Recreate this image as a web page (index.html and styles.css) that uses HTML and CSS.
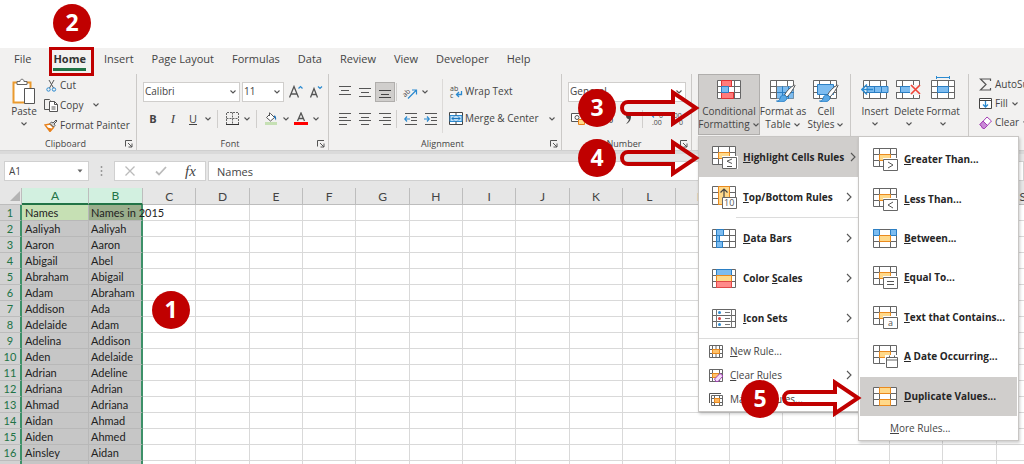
FILE: index.html
```html
<!DOCTYPE html>
<html lang="en">
<head>
<meta charset="utf-8">
<title>Conditional Formatting - Duplicate Values</title>
<link rel="stylesheet" href="styles.css">
</head>
<body>
<svg class="defs" aria-hidden="true">
  <symbol id="chev" viewBox="0 0 8 8"><path d="M1.500 2.500 4 5l2.500-2.500" fill="none" stroke="#555" stroke-width="1.100"/></symbol>
  <symbol id="next" viewBox="0 0 8 12"><path d="M2 2 6 6 2 10" fill="none" stroke="#555" stroke-width="1.100"/></symbol>
  <symbol id="launch" viewBox="0 0 8 8"><path d="M.5 6.500V.5H7M3 3l4 4M7 3.500V7H3.500" fill="none" stroke="#555"/></symbol>
  <symbol id="grid" viewBox="0 0 24 19"><path d="M.5.5h23v18H.5z" fill="#fff"/><path d="M.5.5h23v18H.5zM6.500.5v18M17.500.5v18M.5 6.500h23M.5 12.500h23" fill="none" stroke="#666"/></symbol>
  <symbol id="rule" viewBox="0 0 26 23"><use href="#grid" width="24" height="19"/><path d="M6.500 6.500h11v6h-11z" fill="#ffd98a" stroke="#ea8a1e"/><path d="M10 10h16v13H10z" fill="#fff"/><path d="M10.500 11.500h14v11h-14z" fill="#fff" stroke="#666"/></symbol>
  <symbol id="brush" viewBox="0 0 20 19"><path d="M18.500 1c-4 2-8 6-10 10l2.500 2C14 10 17.500 5 19 1.500z" fill="#fff" stroke="#555"/><path d="M8 11c-2 0-3.500 1-4 3.500C3.500 16.500 2 17 .5 17c3 1.500 8 1.500 10-1.500.7-1.500.3-3-.5-3.500z" fill="#5aa9e6" stroke="#2b7fc4"/></symbol>
</svg>

<div class="app">
  <nav class="tabs" aria-label="Ribbon tabs">
    <button>File</button><button class="active">Home</button><button>Insert</button><button>Page Layout</button><button>Formulas</button><button>Data</button><button>Review</button><button>View</button><button>Developer</button><button>Help</button>
  </nav>

  <div class="ribbon">
    <section class="group clipboard">
      <div class="body">
        <button class="big paste">
          <svg width="24" height="26" viewBox="0 0 24 26"><path d="M1.500 4.500h17v20h-17z" fill="#fff" stroke="#ea9a2e" stroke-width="2"/><path d="M5 6.500v-3h3c0-3 4-3 4 0h3v3z" fill="#fff" stroke="#666"/><path d="M12.500 10.500h10v15h-10z" fill="#fff" stroke="#555"/></svg>
          <span>Paste</span><svg width="8" height="8"><use href="#chev"/></svg>
        </button>
        <div class="stack">
          <button class="item"><svg width="14" height="13" viewBox="0 0 14 13"><path d="M5 1l4.500 8M10 1 5.500 9" stroke="#555" fill="none"/><circle cx="4.500" cy="10.500" r="1.700" fill="none" stroke="#2b8ad0"/><circle cx="10" cy="10.500" r="1.700" fill="none" stroke="#2b8ad0"/></svg>Cut</button>
          <button class="item"><svg width="14" height="13" viewBox="0 0 14 13"><path d="M5 10.500H.5V.5h5l1 1" fill="none" stroke="#555"/><path d="M5.500 2.500h5l3 3v7h-8z" fill="#fff" stroke="#555"/><path d="M10.500 2.500v3h3M7.500 8h4M7.500 10h4" fill="none" stroke="#555"/></svg>Copy<svg class="after" width="8" height="8"><use href="#chev"/></svg></button>
          <button class="item"><svg width="14" height="13" viewBox="0 0 14 13"><path d="M1 6l5-1 3.500 3.500L6 12.500z" fill="#fff" stroke="#e8801a" stroke-width="1.400"/><path d="M3 8.500l5 1-2 3z" fill="#e8801a"/><path d="M6 4.500l1.500-1.500 1.500 1 3-3 1 1-3 3 1 1.500L9.500 8z" fill="#ddd" stroke="#555"/></svg>Format Painter</button>
        </div>
      </div>
      <footer><span>Clipboard</span><svg width="8" height="8"><use href="#launch"/></svg></footer>
    </section>

    <section class="group font">
      <div class="body rows">
        <div class="row">
          <label class="combo family"><select aria-label="Font"><option>Calibri</option></select><svg width="8" height="8"><use href="#chev"/></svg></label>
          <label class="combo size"><select aria-label="Font size"><option>11</option></select><svg width="8" height="8"><use href="#chev"/></svg></label>
          <button class="tool" aria-label="Increase font size"><svg width="14" height="14" viewBox="0 0 14 14"><path d="M.5 12.500 5 1.500l4.500 11M2 9h6" fill="none" stroke="#555" stroke-width="1.300"/><path d="M9.500 3.500l2-2 2 2" fill="none" stroke="#2b8ad0" stroke-width="1.200"/></svg></button>
          <button class="tool" aria-label="Decrease font size"><svg width="14" height="14" viewBox="0 0 14 14"><path d="M1.500 12.500l3.500-9 3.500 9M2.500 9.500h5" fill="none" stroke="#555" stroke-width="1.300"/><path d="M9 1.500l2 2 2-2" fill="none" stroke="#2b8ad0" stroke-width="1.200"/></svg></button>
        </div>
        <div class="row">
          <button class="tool b">B</button><button class="tool i">I</button><button class="tool u">U</button>
          <svg width="10" height="8"><use href="#chev"/></svg><i class="bar"></i>
          <button class="tool" aria-label="Borders"><svg width="13" height="13" viewBox="0 0 13 13"><path d="M.5 12V.5h12V12M6.500.5v12M.5 6.500h12" fill="none" stroke="#666" stroke-dasharray="2 1"/><path d="M0 12.500h13" stroke="#333"/></svg></button>
          <svg width="10" height="8"><use href="#chev"/></svg><i class="bar"></i>
          <button class="tool" aria-label="Fill color"><svg width="14" height="13" viewBox="0 0 14 13"><path d="M2.500 5.500 6.500 1.500l4 4-4 3.500z" fill="#fff" stroke="#555"/><path d="M5.500 4V.5" stroke="#555"/><path d="M10 3.500c2 0 2.500 2 2 5-1-1-1-3-2-3z" fill="#1f6fb5"/><path d="M1 10h12v3H1z" fill="#c6e0b4"/></svg></button>
          <svg width="10" height="8"><use href="#chev"/></svg>
          <button class="tool" aria-label="Font color"><svg width="14" height="13" viewBox="0 0 14 13"><path d="M3.500 9 7 1l3.500 8M5 6.500h4" fill="none" stroke="#555" stroke-width="1.300"/><path d="M0 10h14v3H0z" fill="#f00"/></svg></button>
          <svg width="10" height="8"><use href="#chev"/></svg>
        </div>
      </div>
      <footer><span>Font</span><svg width="8" height="8"><use href="#launch"/></svg></footer>
    </section>

    <section class="group align">
      <div class="body">
        <div class="rows">
          <div class="row">
            <button class="tool" aria-label="Top align"><svg width="12" height="14" viewBox="0 0 12 14"><path d="M0 1.500h12M2 5.500h8M0 9.500h12" stroke="#555"/></svg></button>
            <button class="tool" aria-label="Middle align"><svg width="12" height="14" viewBox="0 0 12 14"><path d="M0 3.500h12M2 7.500h8M0 11.500h12" stroke="#555"/></svg></button>
            <button class="tool pressed" aria-label="Bottom align"><svg width="12" height="14" viewBox="0 0 12 14"><path d="M0 5.500h12M2 9.500h8M0 12.500h12" stroke="#444"/></svg></button>
            <i class="bar"></i>
            <button class="tool" aria-label="Orientation"><svg width="16" height="14" viewBox="0 0 16 14"><text x="1" y="10" class="mini" transform="rotate(-45 5 9)">ab</text><path d="M6 13.500 14 5.500M10 5h4.500v4.500" fill="none" stroke="#2b8ad0" stroke-width="1.200"/></svg></button>
            <svg width="10" height="8"><use href="#chev"/></svg>
          </div>
          <div class="row">
            <button class="tool" aria-label="Align left"><svg width="12" height="12" viewBox="0 0 12 12"><path d="M0 .5h12M0 4.500h8M0 7.500h12M0 11.500h8" stroke="#555"/></svg></button>
            <button class="tool" aria-label="Center"><svg width="12" height="12" viewBox="0 0 12 12"><path d="M0 .5h12M2 4.500h8M0 7.500h12M2 11.500h8" stroke="#555"/></svg></button>
            <button class="tool" aria-label="Align right"><svg width="12" height="12" viewBox="0 0 12 12"><path d="M0 .5h12M4 4.500h8M0 7.500h12M4 11.500h8" stroke="#555"/></svg></button>
            <i class="bar"></i>
            <button class="tool" aria-label="Decrease indent"><svg width="13" height="12" viewBox="0 0 13 12"><path d="M1 .5h12M7 4.500h6M7 7.500h6M1 11.500h12" stroke="#555"/><path d="M6 6H1M3 3.500.8 6 3 8.500" fill="none" stroke="#2b8ad0" stroke-width="1.200"/></svg></button>
            <button class="tool" aria-label="Increase indent"><svg width="13" height="12" viewBox="0 0 13 12"><path d="M1 .5h12M7 4.500h6M7 7.500h6M1 11.500h12" stroke="#555"/><path d="M0 6h5M3 3.500 5.200 6 3 8.500" fill="none" stroke="#2b8ad0" stroke-width="1.200"/></svg></button>
          </div>
        </div>
        <div class="rows wraps">
          <button class="item"><svg width="14" height="14" viewBox="0 0 14 14"><text x="1" y="6" class="mini wide">ab</text><text x="1" y="13" class="mini wide">c</text><path d="M12.500 6v3.500H7.500M10 7l-2.500 2.500L10 12" fill="none" stroke="#2b8ad0" stroke-width="1.300"/></svg>Wrap Text</button>
          <button class="item"><svg width="14" height="13" viewBox="0 0 14 13"><path d="M.5.5h13v12H.5z" fill="#fff" stroke="#444"/><path d="M1 3.500h12v6H1z" fill="#b9dcf6" stroke="#2b8ad0"/><path d="M7 .5v3M7 9.500v3" stroke="#444"/><path d="M3 6.500h8M5 4.500l-2 2 2 2M9 4.500l2 2-2 2" fill="none" stroke="#1b75bb"/></svg>Merge &amp; Center<svg class="after" width="8" height="8"><use href="#chev"/></svg></button>
        </div>
      </div>
      <footer><span>Alignment</span><svg width="8" height="8"><use href="#launch"/></svg></footer>
    </section>

    <section class="group number">
      <div class="body rows">
        <div class="row"><label class="combo format"><select aria-label="Number format"><option>General</option></select><svg width="8" height="8"><use href="#chev"/></svg></label></div>
        <div class="row">
          <button class="tool" aria-label="Accounting format"><svg width="15" height="13" viewBox="0 0 15 13"><path d="M.5 1.500h13v8H.5z" fill="#fff" stroke="#555"/><circle cx="6" cy="5.500" r="2" fill="none" stroke="#555"/><path d="M7.500 7.500h6v5h-6z" fill="#ffd98a" stroke="#e8801a"/></svg></button>
          <svg width="10" height="8"><use href="#chev"/></svg>
          <button class="tool pct">%</button>
          <button class="tool comma" aria-label="Comma style"><svg width="8" height="12" viewBox="0 0 8 12"><path d="M2 2.500C2 0 7 0 7 3.500S5 10 2 11c2-2 3-3.500 2.800-5C3 6 2 4.500 2 2.500z" fill="#444"/></svg></button>
          <i class="bar"></i>
          <button class="tool" aria-label="Increase decimal"><svg width="15" height="14" viewBox="0 0 15 14"><path d="M7 3H1.500M4 .5 1.500 3 4 5.500" fill="none" stroke="#2b8ad0" stroke-width="1.200"/><text x="9" y="6" class="mini wide">0</text><text x="2" y="13" class="mini wide">.00</text></svg></button>
          <button class="tool" aria-label="Decrease decimal"><svg width="15" height="14" viewBox="0 0 15 14"><text x="2" y="6" class="mini wide">.00</text><text x="9" y="13" class="mini wide">0</text><path d="M1 10h5.500M4 7.500 6.500 10 4 12.500" fill="none" stroke="#2b8ad0" stroke-width="1.200"/></svg></button>
        </div>
      </div>
      <footer><span>Number</span><svg width="8" height="8"><use href="#launch"/></svg></footer>
    </section>

    <section class="group styles">
      <div class="body">
        <button class="big cond pressed">
          <svg width="24" height="22" viewBox="0 0 24 22"><use href="#grid" width="24" height="19"/><path d="M4.500.5h10v6h-10zM4.500 12.500h12v6h-12z" fill="#ff7b7b" stroke="#d33"/><path d="M4.500 6.500h7v6h-7z" fill="#7dbcf0" stroke="#2b7fc4"/></svg>
          <span>Conditional</span><span>Formatting <svg width="8" height="8"><use href="#chev"/></svg></span>
        </button>
        <button class="big w44">
          <svg width="26" height="22" viewBox="0 0 26 22"><use href="#grid" width="24" height="19"/><path d="M7 6.500h16.500v12H7z" fill="#7dbcf0"/><path d="M12.500 6v13M18.500 6v13M7 12.500h17" stroke="#2b7fc4"/><use href="#brush" x="6" y="4" width="20" height="19"/></svg>
          <span>Format as</span><span>Table <svg width="8" height="8"><use href="#chev"/></svg></span>
        </button>
        <button class="big w40">
          <svg width="26" height="22" viewBox="0 0 26 22"><use href="#grid" width="24" height="19"/><path d="M4.500 4.500h16v10h-16z" fill="#7dbcf0" stroke="#2b7fc4"/><use href="#brush" x="6" y="4" width="20" height="19"/></svg>
          <span>Cell</span><span>Styles <svg width="8" height="8"><use href="#chev"/></svg></span>
        </button>
      </div>
    </section>

    <section class="group cells">
      <div class="body">
        <button class="big w34"><svg width="28" height="22" viewBox="0 0 28 22"><use href="#grid" x="2" width="24" height="19"/><path d="M6 6.500h21v6H6z" fill="#7dbcf0" stroke="#2b7fc4"/><path d="M20.500 6.500v6M13.500 6.500v6" stroke="#2b7fc4"/><path d="M12 9.500H1.500M6 4.500l-5 5 5 5" fill="none" stroke="#2b8ad0" stroke-width="1.600"/></svg><span>Insert</span><svg width="8" height="8"><use href="#chev"/></svg></button>
        <button class="big w34"><svg width="26" height="22" viewBox="0 0 26 22"><use href="#grid" width="24" height="19"/><path d="M0 7h4v5H0z" fill="#f2f1f0"/><path d="M4.500 6.500h11v6h-11z" fill="#7dbcf0" stroke="#2b7fc4"/><path d="M14 5h11v10H14z" fill="#f2f1f0"/><path d="M15 5l9 9M24 5l-9 9" stroke="#f04438" stroke-width="1.600"/></svg><span>Delete</span><svg width="8" height="8"><use href="#chev"/></svg></button>
        <button class="big w34 tall"><svg width="24" height="26" viewBox="0 0 24 26"><path d="M6 1.500h12M5.500 0v3M18.500 0v3" stroke="#2b8ad0"/><use href="#grid" y="4" width="24" height="19"/><path d="M6.500 10.500h11v6h-11z" fill="#7dbcf0" stroke="#2b7fc4"/></svg><span>Format</span><svg width="8" height="8"><use href="#chev"/></svg></button>
      </div>
    </section>

    <section class="group editing">
      <div class="stack">
        <button class="item"><svg width="13" height="13" viewBox="0 0 13 13"><path d="M11.500 3V1h-10l5.500 5.500L1.500 12h10v-2" fill="none" stroke="#555" stroke-width="1.200"/></svg>AutoSum</button>
        <button class="item"><svg width="13" height="13" viewBox="0 0 13 13"><path d="M.5 1.500h12v10H.5zM.5 3.500h12" fill="#fff" stroke="#444"/><path d="M6.500 4v6M4 7.500l2.500 2.500L9 7.500" fill="none" stroke="#2b8ad0" stroke-width="1.300"/></svg>Fill <svg width="8" height="8"><use href="#chev"/></svg></button>
        <button class="item"><svg width="13" height="13" viewBox="0 0 13 13"><path d="M1 8.500 8 1l4.500 4-7 7.500H4z" fill="#fff" stroke="#a33fb5"/><path d="M1 8.500l3-3.500 4.500 4.500-3 3H4z" fill="#c98ad6" stroke="#a33fb5"/></svg>Clear <svg width="8" height="8"><use href="#chev"/></svg></button>
      </div>
    </section>
  </div>

  <div class="formula">
    <label class="namebox"><input aria-label="Name box" value="A1"><svg width="8" height="6" viewBox="0 0 8 6"><path d="M1.500 1.500h5L4 4.500z" fill="#666"/></svg></label>
    <svg class="dots" width="3" height="12" viewBox="0 0 3 12"><path d="M1.500 1v10" stroke="#999" stroke-width="1.500" stroke-dasharray="2 2"/></svg>
    <div class="fxbox">
      <button aria-label="Cancel"><svg width="12" height="10" viewBox="0 0 12 10"><path d="M1.500.5l9 9M10.500.5l-9 9" stroke="#bbb" stroke-width="1.300"/></svg></button>
      <button aria-label="Enter"><svg width="12" height="10" viewBox="0 0 12 10"><path d="M1 5.500l3 3L11 1" fill="none" stroke="#bbb" stroke-width="1.800"/></svg></button>
      <button class="fx">fx</button>
    </div>
    <input class="entry" aria-label="Formula bar" value="Names">
  </div>

  <div class="sheet"><table><colgroup id="cols"></colgroup><thead><tr id="head"></tr></thead><tbody id="rows"></tbody></table></div>

  <div class="menu main" role="menu">
    <button class="entry-big on"><svg width="26" height="23" viewBox="0 0 26 23"><use href="#rule"/><path d="M20 13l-5 2.200 5 2.300M15 20.500h5" fill="none" stroke="#555"/></svg><span><u>H</u>ighlight Cells Rules</span><svg width="8" height="12"><use href="#next"/></svg></button>
    <button class="entry-big"><svg width="26" height="23" viewBox="0 0 26 23"><use href="#grid" width="24" height="19"/><path d="M6.500.5h11v18h-11z" fill="#ffd98a" stroke="#ea8a1e"/><path d="M12 11V3M8.500 6.500 12 3l3.500 3.500" fill="none" stroke="#444" stroke-width="1.200"/><path d="M10.500 11.500h14v11h-14z" fill="#fff" stroke="#666"/><text x="12" y="20" class="glyph">10</text></svg><span><u>T</u>op/Bottom Rules</span><svg width="8" height="12"><use href="#next"/></svg></button>
    <hr class="inset">
    <button class="entry-big"><svg width="26" height="19" viewBox="0 0 26 19"><use href="#grid" width="24" height="19"/><path d="M4.500.5h7v6h-7zM4.500 6.500h3v6h-3zM4.500 12.500h6v6h-6z" fill="#7dbcf0" stroke="#2b7fc4"/></svg><span><u>D</u>ata Bars</span><svg width="8" height="12"><use href="#next"/></svg></button>
    <button class="entry-big"><svg width="26" height="19" viewBox="0 0 26 19"><use href="#grid" width="24" height="19"/><path d="M4.500.5h15v6h-15z" fill="#7dbcf0" stroke="#2b7fc4"/><path d="M4.500 6.500h15v6h-15z" fill="#ffd98a" stroke="#ea8a1e"/><path d="M4.500 12.500h15v6h-15z" fill="#ff8a8a" stroke="#e04848"/></svg><span>Color <u>S</u>cales</span><svg width="8" height="12"><use href="#next"/></svg></button>
    <button class="entry-big"><svg width="26" height="19" viewBox="0 0 26 19"><use href="#grid" width="24" height="19"/><path d="M5 1h14v5H5zM5 7h14v5H5zM5 13h14v5H5z" fill="#fff"/><path d="M4.500.5v18M19.500.5v18M13 3.500h5M13 9.500h5M13 15.500h5" stroke="#777"/><circle cx="7.500" cy="3.500" r="1.500" fill="#2b8ad0"/><circle cx="7.500" cy="9.500" r="1.500" fill="#e04040"/><circle cx="7.500" cy="15.500" r="1.500" fill="#2b8ad0"/></svg><span><u>I</u>con Sets</span><svg width="8" height="12"><use href="#next"/></svg></button>
    <hr>
    <button class="entry-small"><svg width="14" height="13" viewBox="0 0 14 13"><path d="M.5.5h13v12H.5zM3.500.5v12M10.500.5v12M.5 4.500h13M.5 8.500h13M7 .5v12" fill="#fff" stroke="#666"/><path d="M3.500 4.500h7v4h-7z" fill="#ffc36b" stroke="#ea8a1e"/></svg><span><u>N</u>ew Rule...</span></button>
    <button class="entry-small"><svg width="14" height="13" viewBox="0 0 14 13"><path d="M.5.5h13v12H.5zM3.500.5v12M10.500.5v12M.5 4.500h13M.5 8.500h13" fill="#fff" stroke="#666"/><path d="M3.500 4.500h6v4h-6z" fill="#ffc36b" stroke="#ea8a1e"/><path d="M5.500 10 11 4.500l3 2.500-5 5.500H7z" fill="#f2dcf6" stroke="#a33fb5"/></svg><span><u>C</u>lear Rules</span><svg width="8" height="12"><use href="#next"/></svg></button>
    <button class="entry-small"><svg width="14" height="13" viewBox="0 0 14 13"><path d="M.5 10V.5H12" fill="none" stroke="#555"/><path d="M2.500 2.500h11v10h-11zM5.500 2.500v10M10.500 2.500v10M2.500 5.500h11M2.500 9.500h11" fill="#fff" stroke="#666"/><path d="M5.500 5.500h5v4h-5z" fill="#ffb65c" stroke="#ea8a1e"/></svg><span>Ma<u>n</u>age Rules...</span></button>
  </div>

  <div class="menu sub" role="menu">
    <div class="list">
      <button class="entry-big"><svg width="26" height="23" viewBox="0 0 26 23"><use href="#rule"/><path d="M15 14l5 3-5 3" fill="none" stroke="#555"/></svg><span><u>G</u>reater Than...</span></button>
      <button class="entry-big"><svg width="26" height="23" viewBox="0 0 26 23"><use href="#rule"/><path d="M20 14l-5 3 5 3" fill="none" stroke="#555"/></svg><span><u>L</u>ess Than...</span></button>
      <button class="entry-big"><svg class="flat" width="26" height="19" viewBox="0 0 26 19"><use href="#grid" width="24" height="19"/><path d="M.5.5h6v6h-6zM17.500.5h6v6h-6z" fill="#7dbcf0" stroke="#2b7fc4"/><path d="M6.500 6.500h11v6h-11z" fill="#ffd98a" stroke="#ea8a1e"/></svg><span><u>B</u>etween...</span></button>
      <button class="entry-big"><svg width="26" height="23" viewBox="0 0 26 23"><use href="#rule"/><path d="M14 15.500h7M14 18.500h7" stroke="#555"/></svg><span><u>E</u>qual To...</span></button>
      <button class="entry-big"><svg width="26" height="23" viewBox="0 0 26 23"><use href="#rule"/><text x="15" y="20" class="glyph">a</text></svg><span><u>T</u>ext that Contains...</span></button>
      <button class="entry-big"><svg width="26" height="23" viewBox="0 0 26 23"><use href="#grid" width="24" height="19"/><path d="M6.500 6.500h11v6h-11z" fill="#ffd98a" stroke="#ea8a1e"/><path d="M12 10h14v13H12z" fill="#fff"/><path d="M13.500 12.500h11v10h-11zM13.500 15h11M16.500 10.500v2M21.500 10.500v2" fill="#fff" stroke="#666"/></svg><span><u>A</u> Date Occurring...</span></button>
      <button class="entry-big on"><svg class="flat" width="26" height="19" viewBox="0 0 26 19"><use href="#grid" width="24" height="19"/><path d="M6.500.5h11v6h-11zM6.500 12.500h11v6h-11z" fill="#ffd98a" stroke="#ea8a1e"/></svg><span><u>D</u>uplicate Values...</span></button>
    </div>
    <button class="more"><u>M</u>ore Rules...</button>
  </div>

  <div class="frame"></div>
  <span class="step s1">1</span><span class="step s2">2</span><span class="step s3">3</span><span class="step s4">4</span><span class="step s5">5</span>
  <svg class="arrow a3" width="80" height="38" viewBox="0 0 80 38"><path d="M53 13H8a6 6 0 0 0 0 12h45v9.500L76 19 53 3.500z"/></svg>
  <svg class="arrow a4" width="80" height="38" viewBox="0 0 80 38"><path d="M53 13H8a6 6 0 0 0 0 12h45v9.500L76 19 53 3.500z"/></svg>
  <svg class="arrow a5" width="80" height="38" viewBox="0 0 80 38"><path d="M53 13H8a6 6 0 0 0 0 12h45v9.500L76 19 53 3.500z"/></svg>
</div>
<script src="script.js"></script>
</body>
</html>
```
FILE: styles.css
```css
* { box-sizing: border-box; }
body { margin: 0; background: #fff; color: #444; font: 10px/13px "Open Sans", "Noto Sans", sans-serif; }
button, input, select { font: inherit; color: inherit; border: 0; background: none; margin: 0; padding: 0; }
svg { display: block; flex: none; }
.defs { position: absolute; width: 0; height: 0; }
.app { position: relative; height: 100vh; overflow: hidden; padding-top: 48px; display: flex; flex-direction: column; }

.tabs { display: flex; flex: none; gap: 18px; padding: 0 14px; height: 26px; background: #f2f1f0; font-size: 11px; }
.tabs button { height: 23px; border-bottom: 3px solid transparent; white-space: nowrap; }
.tabs .active { margin-left: 4px; font-weight: 700; color: #333; border-color: #217346; }

.ribbon { display: flex; flex: none; height: 77px; background: #f2f1f0; border-bottom: 1px solid #cfcfcf; }
.group { display: flex; flex-direction: column; flex: none; border-right: 1px solid #cbc9c7; }
.body { display: flex; flex: 1; }
.group footer { display: flex; align-items: center; height: 12px; padding-right: 3px; font-size: 9px; line-height: 12px; }
.group footer span { flex: 1; text-align: center; padding-left: 6px; }
.clipboard { width: 137px; }
.font { width: 192px; }
.align { width: 233px; }
.number { width: 130px; }
.styles { width: 159px; padding-left: 6px; }
.cells { width: 118px; padding-left: 7px; }
.editing { flex: 1 0 56px; border: 0; padding-left: 10px; overflow: hidden; }

.big { display: flex; flex-direction: column; align-items: center; height: 61px; padding-top: 6px; line-height: 13px; white-space: nowrap; }
.big > svg:first-child { margin-bottom: 3px; }
.big span { display: flex; align-items: center; gap: 2px; }
.big > svg:last-child { margin-top: 2px; }
.big.tall { padding-top: 2px; }
.paste { width: 36px; margin-left: 6px; padding-top: 4px; }
.paste > svg:first-child { margin-bottom: 1px; }
.cond { width: 62px; }
.pressed { background: #d0cecc; outline: 1px solid #b0aeac; outline-offset: -1px; }
.w44 { width: 46px; }
.w40 { width: 40px; }
.w34 { width: 34px; }
.stack { display: flex; flex-direction: column; padding-top: 1px; }
.item { display: flex; align-items: center; gap: 2px; height: 20px; white-space: nowrap; }
.item .after { margin-left: 7px; }
.editing .item { height: 19px; gap: 3px; }
.clipboard .stack { margin-left: 2px; }

.rows { display: flex; flex-direction: column; padding-top: 7px; gap: 6px; }
.row { display: flex; align-items: center; height: 21px; }
.font .rows { padding-left: 6px; }
.combo { display: flex; align-items: center; height: 20px; padding: 0 2px 0 1px; background: #fff; border: 1px solid #d0cecc; }
.combo select { flex: 1; min-width: 0; appearance: none; }
.family { width: 97px; }
.size { width: 42px; margin: 0 2px; }
.format { width: 118px; }
.tool { display: flex; align-items: center; justify-content: center; width: 20px; height: 20px; font-size: 11px; }
.b { font-weight: 700; }
.i { font-family: "Liberation Serif", serif; font-style: italic; font-size: 13px; }
.u { text-decoration: underline; }
.pct { font-size: 13px; }
.bar { width: 1px; height: 18px; margin: 0 4px; background: #d0cecc; }
.align .rows { padding-left: 6px; }
.align .bar { margin: 0 3px 0 1px; }
.align .body > .rows:first-child { width: 113px; }
.align .wraps { border-left: 1px solid #dcdad8; margin: 5px 0; padding-top: 2px; }
.align .wraps .item { height: 21px; }
.number .rows { padding-left: 6px; }
.mini { font: 7px "Open Sans", sans-serif; fill: #444; }
.glyph { font: 9px "Open Sans", sans-serif; fill: #555; }

.formula { display: flex; flex: none; align-items: center; height: 37px; padding-left: 4px; background: #e6e6e6; border-top: 3px solid #dadada; font-size: 11px; }
.namebox, .fxbox, .entry { height: 20px; background: #fff; border: 1px solid #d0d0d0; display: flex; align-items: center; }
.namebox { width: 85px; padding: 0 4px; }
.namebox input { flex: 1; min-width: 0; font-size: 10px; }
.dots { margin: 0 11px; }
.fxbox { width: 92px; justify-content: space-around; }
.fx { font: italic 15px "Liberation Serif", serif; }
.entry { flex: 1; min-width: 0; margin-left: 2px; padding: 0 8px; }

.sheet { flex: 1; min-height: 0; overflow: hidden; color: #222; font: 11px/15px Lato, sans-serif; }
table { width: calc(100% + 26px); table-layout: fixed; border-collapse: separate; border-spacing: 0; }
.c0 { width: 22px; }
.ca { width: 67px; }
.cb { width: 54px; }
th, td { height: 16px; padding: 0; white-space: nowrap; font-weight: 400; border-right: 1px solid #d9d9d9; border-bottom: 1px solid #d9d9d9; }
thead th { height: 17px; font-size: 12px; background: #e6e6e6; border-color: #bdbdbd; color: #444; }
thead .sel { background: #d2f0e0; color: #217346; border-bottom: 2px solid #217346; }
.corner svg { margin-left: auto; }
tbody th { background: #d2d2d2; color: #217346; border-right: 2px solid #3d9068; border-bottom-color: #bcbcbc; }
.a, .b2 { background: #c6c6c6; border-color: #b8b8b8; padding-left: 2px; }
.a { padding-left: 3px; }
.b2 { border-right: 2px solid #3d9068; }
tr:first-child > .a { background: #c6e0b4; }
tr:first-child > .b2 { background: #9aae8c; }
.b2 span { position: relative; }

.menu { position: absolute; top: 136px; background: #fff; border: 1px solid #c8c6c4; box-shadow: 1px 2px 3px #0003; display: flex; flex-direction: column; color: #444; }
.menu button { display: flex; align-items: center; text-align: left; white-space: nowrap; }
.menu span { flex: 1; }
.menu.main { left: 698px; width: 161px; }
.menu.sub { left: 858px; width: 161px; padding: 3px 1px 0; }
.menu .entry-big { height: 40px; padding: 0 5px 0 13px; font-weight: 700; color: #262626; gap: 5px; }
.menu .on { background: #d0cecc; }
.main .entry-small { height: 24px; padding: 0 5px 0 10px; gap: 7px; }
.menu hr { width: 100%; height: 1px; margin: 0; border: 0; background: #dcdcdc; }
.menu hr.inset { width: 122px; margin-left: auto; }
.list { display: grid; grid-template-rows: repeat(7, 1fr); height: 276px; }
.sub .entry-big { height: auto; }
.more { height: 24px; padding-left: 30px; }

.frame { position: absolute; left: 49px; top: 47px; width: 45px; height: 29px; border: 3px solid #c00000; }
.step { position: absolute; width: 38px; height: 38px; border-radius: 50%; background: #c00000; color: #fff; font: 700 23px/37px "Open Sans", sans-serif; text-align: center; }
.s1 { left: 152px; top: 291px; }
.s2 { left: 53px; top: 4px; }
.s3 { left: 578px; top: 89px; }
.s4 { left: 578px; top: 139px; }
.s5 { left: 741px; top: 380px; }
.arrow { position: absolute; fill: none; stroke: #c00000; stroke-width: 4; }
.a3 { left: 620px; top: 89px; }
.a4 { left: 620px; top: 139px; }
.a5 { left: 782px; top: 379px; }
```
FILE: script.js
```js
const names = [
  ["Names", "Names in 2015"], ["Aaliyah", "Aaliyah"], ["Aaron", "Aaron"], ["Abigail", "Abel"],
  ["Abraham", "Abigail"], ["Adam", "Abraham"], ["Addison", "Ada"], ["Adelaide", "Adam"],
  ["Adelina", "Addison"], ["Aden", "Adelaide"], ["Adrian", "Adeline"], ["Adriana", "Adrian"],
  ["Ahmad", "Adriana"], ["Aidan", "Ahmad"], ["Aiden", "Ahmed"], ["Ainsley", "Aidan"], ["", ""]
];
const letters = [..."ABCDEFGHIJKLMNOPQRS"];

document.getElementById("cols").innerHTML =
  '<col class="c0"><col class="ca"><col class="cb">' + "<col>".repeat(letters.length - 2);

document.getElementById("head").innerHTML =
  '<th class="corner"><svg width="12" height="12" viewBox="0 0 12 12"><path d="M11 1v10H1z" fill="#b4b4b4"/></svg></th>' +
  letters.map((l, i) => `<th${i < 2 ? ' class="sel"' : ""}>${l}</th>`).join("");

document.getElementById("rows").innerHTML = names.map(([a, b], i) =>
  `<tr><th>${i + 1}</th><td class="a">${a}</td><td class="b2"><span>${b}</span></td>` +
  "<td></td>".repeat(letters.length - 2) + "</tr>").join("");
```
